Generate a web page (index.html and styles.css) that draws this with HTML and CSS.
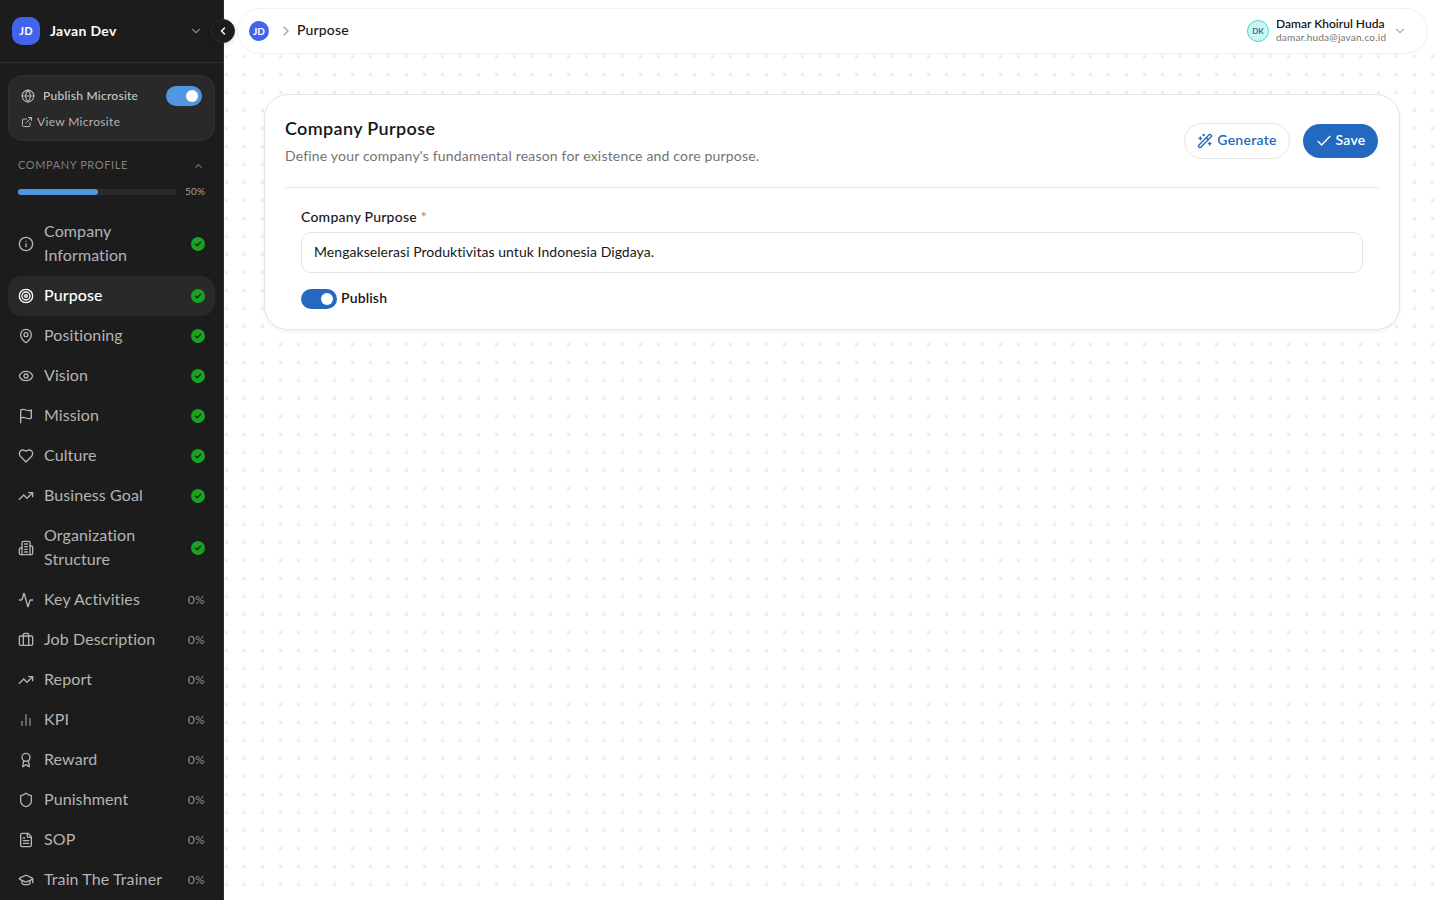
FILE: index.html
```html
<!DOCTYPE html>
<html lang="en">
<head>
  <meta charset="UTF-8">
  <meta name="viewport" content="width=device-width, initial-scale=1">
  <title>Purpose - Javan Dev</title>
  <link rel="stylesheet" href="styles.css">
</head>
<body>

<aside class="sidebar">
  <div class="workspace">
    <span class="logo">JD</span>
    <span class="workspace-name">Javan Dev</span>
    <svg class="icon i14 dim" viewBox="0 0 24 24"><path d="m6 9 6 6 6-6"/></svg>
  </div>
  <button class="collapse"><svg class="icon i12" viewBox="0 0 24 24"><path d="m15 18-6-6 6-6"/></svg></button>

  <div class="microsite">
    <div class="microsite-row">
      <svg class="icon i14" viewBox="0 0 24 24"><circle cx="12" cy="12" r="10"/><path d="M12 2a14.5 14.5 0 0 0 0 20 14.5 14.5 0 0 0 0-20"/><path d="M2 12h20"/></svg>
      <span class="microsite-label">Publish Microsite</span>
      <span class="toggle light"></span>
    </div>
    <a class="microsite-link" href="#">
      <svg class="icon i12" viewBox="0 0 24 24"><path d="M15 3h6v6"/><path d="M10 14 21 3"/><path d="M18 13v6a2 2 0 0 1-2 2H5a2 2 0 0 1-2-2V8a2 2 0 0 1 2-2h6"/></svg>
      <span>View Microsite</span>
    </a>
  </div>

  <div class="group">
    <span class="group-title">COMPANY PROFILE</span>
    <svg class="icon i12" viewBox="0 0 24 24"><path d="m6 15 6-6 6 6"/></svg>
  </div>
  <div class="progress">
    <div class="track"><div class="bar" style="width: 50%"></div></div>
    <span class="progress-value">50%</span>
  </div>

  <nav class="menu">
    <a class="item" href="#">
      <svg class="icon i16" viewBox="0 0 24 24"><circle cx="12" cy="12" r="10"/><path d="M12 16v-4"/><path d="M12 8h.01"/></svg>
      <span class="name">Company Information</span>
      <svg class="done" viewBox="0 0 14 14"><circle cx="7" cy="7" r="7"/><path d="m4.3 7.1 1.9 1.7 3.4-3.5"/></svg>
    </a>
    <a class="item active" href="#">
      <svg class="icon i16" viewBox="0 0 24 24"><circle cx="12" cy="12" r="10"/><circle cx="12" cy="12" r="6"/><circle cx="12" cy="12" r="2"/></svg>
      <span class="name">Purpose</span>
      <svg class="done" viewBox="0 0 14 14"><circle cx="7" cy="7" r="7"/><path d="m4.3 7.1 1.9 1.7 3.4-3.5"/></svg>
    </a>
    <a class="item" href="#">
      <svg class="icon i16" viewBox="0 0 24 24"><path d="M20 10c0 5-5.500 10.200-7.400 11.800a1 1 0 0 1-1.200 0C9.500 20.200 4 15 4 10a8 8 0 0 1 16 0"/><circle cx="12" cy="10" r="3"/></svg>
      <span class="name">Positioning</span>
      <svg class="done" viewBox="0 0 14 14"><circle cx="7" cy="7" r="7"/><path d="m4.3 7.1 1.9 1.7 3.4-3.5"/></svg>
    </a>
    <a class="item" href="#">
      <svg class="icon i16" viewBox="0 0 24 24"><path d="M2.060 12.350a1 1 0 0 1 0-.7 10.750 10.750 0 0 1 19.880 0 1 1 0 0 1 0 .7 10.750 10.750 0 0 1-19.880 0"/><circle cx="12" cy="12" r="3"/></svg>
      <span class="name">Vision</span>
      <svg class="done" viewBox="0 0 14 14"><circle cx="7" cy="7" r="7"/><path d="m4.3 7.1 1.9 1.7 3.4-3.5"/></svg>
    </a>
    <a class="item" href="#">
      <svg class="icon i16" viewBox="0 0 24 24"><path d="M4 15s1-1 4-1 5 2 8 2 4-1 4-1V3s-1 1-4 1-5-2-8-2-4 1-4 1z"/><path d="M4 22v-7"/></svg>
      <span class="name">Mission</span>
      <svg class="done" viewBox="0 0 14 14"><circle cx="7" cy="7" r="7"/><path d="m4.3 7.1 1.9 1.7 3.4-3.5"/></svg>
    </a>
    <a class="item" href="#">
      <svg class="icon i16" viewBox="0 0 24 24"><path d="M19 14c1.490-1.460 3-3.210 3-5.500A5.500 5.500 0 0 0 16.500 3c-1.760 0-3 .5-4.500 2-1.500-1.500-2.740-2-4.500-2A5.500 5.500 0 0 0 2 8.500c0 2.300 1.500 4.050 3 5.500l7 7Z"/></svg>
      <span class="name">Culture</span>
      <svg class="done" viewBox="0 0 14 14"><circle cx="7" cy="7" r="7"/><path d="m4.3 7.1 1.9 1.7 3.4-3.5"/></svg>
    </a>
    <a class="item" href="#">
      <svg class="icon i16" viewBox="0 0 24 24"><path d="m22 7-8.500 8.500-5-5L2 17"/><path d="M16 7h6v6"/></svg>
      <span class="name">Business Goal</span>
      <svg class="done" viewBox="0 0 14 14"><circle cx="7" cy="7" r="7"/><path d="m4.3 7.1 1.9 1.7 3.4-3.5"/></svg>
    </a>
    <a class="item" href="#">
      <svg class="icon i16" viewBox="0 0 24 24"><path d="M6 22V4a2 2 0 0 1 2-2h8a2 2 0 0 1 2 2v18Z"/><path d="M6 12H4a2 2 0 0 0-2 2v6a2 2 0 0 0 2 2h2"/><path d="M18 9h2a2 2 0 0 1 2 2v9a2 2 0 0 1-2 2h-2"/><path d="M10 6h4M10 10h4M10 14h4M10 18h4"/></svg>
      <span class="name">Organization Structure</span>
      <svg class="done" viewBox="0 0 14 14"><circle cx="7" cy="7" r="7"/><path d="m4.3 7.1 1.9 1.7 3.4-3.5"/></svg>
    </a>
    <a class="item" href="#">
      <svg class="icon i16" viewBox="0 0 24 24"><path d="M22 12h-2.480a2 2 0 0 0-1.930 1.460l-2.350 8.360a.25.25 0 0 1-.48 0L9.240 2.180a.25.25 0 0 0-.48 0l-2.350 8.360A2 2 0 0 1 4.490 12H2"/></svg>
      <span class="name">Key Activities</span>
      <span class="percent">0%</span>
    </a>
    <a class="item" href="#">
      <svg class="icon i16" viewBox="0 0 24 24"><path d="M16 20V4a2 2 0 0 0-2-2h-4a2 2 0 0 0-2 2v16"/><rect x="2" y="6" width="20" height="14" rx="2"/></svg>
      <span class="name">Job Description</span>
      <span class="percent">0%</span>
    </a>
    <a class="item" href="#">
      <svg class="icon i16" viewBox="0 0 24 24"><path d="m22 7-8.500 8.500-5-5L2 17"/><path d="M16 7h6v6"/></svg>
      <span class="name">Report</span>
      <span class="percent">0%</span>
    </a>
    <a class="item" href="#">
      <svg class="icon i16 bars" viewBox="0 0 24 24"><path d="M18 20V10"/><path d="M12 20V4"/><path d="M6 20v-6"/></svg>
      <span class="name">KPI</span>
      <span class="percent">0%</span>
    </a>
    <a class="item" href="#">
      <svg class="icon i16" viewBox="0 0 24 24"><circle cx="12" cy="8" r="6"/><path d="m15.480 12.890 1.510 8.530a.5.5 0 0 1-.81.47l-3.580-2.690a1 1 0 0 0-1.200 0l-3.590 2.690a.5.5 0 0 1-.81-.47l1.510-8.530"/></svg>
      <span class="name">Reward</span>
      <span class="percent">0%</span>
    </a>
    <a class="item" href="#">
      <svg class="icon i16" viewBox="0 0 24 24"><path d="M20 13c0 5-3.500 7.500-7.660 8.950a1 1 0 0 1-.67-.01C7.500 20.500 4 18 4 13V6a1 1 0 0 1 1-1c2 0 4.500-1.200 6.240-2.720a1.170 1.170 0 0 1 1.520 0C14.510 3.810 17 5 19 5a1 1 0 0 1 1 1z"/></svg>
      <span class="name">Punishment</span>
      <span class="percent">0%</span>
    </a>
    <a class="item" href="#">
      <svg class="icon i16" viewBox="0 0 24 24"><path d="M15 2H6a2 2 0 0 0-2 2v16a2 2 0 0 0 2 2h12a2 2 0 0 0 2-2V7Z"/><path d="M14 2v4a2 2 0 0 0 2 2h4"/><path d="M10 9H8M16 13H8M16 17H8"/></svg>
      <span class="name">SOP</span>
      <span class="percent">0%</span>
    </a>
    <a class="item" href="#">
      <svg class="icon i16" viewBox="0 0 24 24"><path d="M21.420 10.920a1 1 0 0 0-.02-1.840L12.830 5.180a2 2 0 0 0-1.660 0L2.600 9.080a1 1 0 0 0 0 1.830l8.570 3.910a2 2 0 0 0 1.660 0z"/><path d="M22 10v6"/><path d="M6 12.500V16a6 3 0 0 0 12 0v-3.500"/></svg>
      <span class="name">Train The Trainer</span>
      <span class="percent">0%</span>
    </a>
  </nav>
</aside>

<main class="main">
  <div class="top">
    <header class="topbar">
      <span class="logo small">JD</span>
      <svg class="icon i16 crumb-arrow" viewBox="0 0 24 24"><path d="m9 18 6-6-6-6"/></svg>
      <span class="crumb">Purpose</span>
      <div class="user">
        <span class="avatar">DK</span>
        <div class="user-text">
          <div class="user-name">Damar Khoirul Huda</div>
          <div class="user-mail">damar.huda@javan.co.id</div>
        </div>
        <svg class="icon i14 user-arrow" viewBox="0 0 24 24"><path d="m6 9 6 6 6-6"/></svg>
      </div>
    </header>
  </div>

  <section class="card">
    <div class="card-head">
      <div>
        <h2>Company Purpose</h2>
        <p class="desc">Define your company's fundamental reason for existence and core purpose.</p>
      </div>
      <div class="actions">
        <button class="btn outline">
          <svg class="icon i16" viewBox="0 0 24 24"><path d="m21.640 3.640-1.280-1.280a1.210 1.210 0 0 0-1.720 0L2.360 18.640a1.210 1.210 0 0 0 0 1.720l1.280 1.280a1.200 1.200 0 0 0 1.720 0L21.640 5.360a1.200 1.200 0 0 0 0-1.720"/><path d="m14 7 3 3"/><path d="M5 6v4M19 14v4M10 2v2M7 8H3M21 16h-4M11 3H9"/></svg>
          <span>Generate</span>
        </button>
        <button class="btn primary">
          <svg class="icon i16" viewBox="0 0 24 24"><path d="M21 5 8.500 18 3 12.500"/></svg>
          <span>Save</span>
        </button>
      </div>
    </div>
    <div class="form">
      <label class="label" for="purpose">Company Purpose <span class="required">*</span></label>
      <input class="input" id="purpose" type="text" value="Mengakselerasi Produktivitas untuk Indonesia Digdaya.">
      <div class="publish">
        <span class="toggle"></span>
        <span class="publish-label">Publish</span>
      </div>
    </div>
  </section>
</main>

</body>
</html>
```
FILE: styles.css
```css
* {
  box-sizing: border-box;
}
body {
  margin: 0;
  height: 100vh;
  display: flex;
  overflow: hidden;
  font-family: Lato, "Open Sans", sans-serif;
  font-variant-ligatures: none;
  color: #171717;
  background: #fff;
}
button {
  font-family: inherit;
}

.icon {
  flex: none;
  fill: none;
  stroke: currentColor;
  stroke-width: 2;
  stroke-linecap: round;
  stroke-linejoin: round;
}
.i12 { width: 12px; height: 12px; }
.i14 { width: 14px; height: 14px; }
.i16 { width: 16px; height: 16px; }

/* sidebar */
.sidebar {
  position: relative;
  z-index: 2;
  width: 224px;
  flex: none;
  background: #1c1c1c;
  border-right: 1px solid #2e2e2e;
  color: #b4b4b4;
}
.workspace {
  display: flex;
  align-items: center;
  height: 63px;
  padding: 0 20px 0 12px;
  border-bottom: 1px solid #2e2e2e;
}
.logo {
  display: flex;
  align-items: center;
  justify-content: center;
  width: 28px;
  height: 28px;
  padding-bottom: 1px;
  border-radius: 10px;
  background: #4263eb;
  color: #fff;
  font-size: 11px;
  font-weight: 700;
  letter-spacing: 0.2px;
}
.logo.small {
  width: 20px;
  height: 20px;
  border-radius: 50%;
  font-size: 10px;
  letter-spacing: 0;
}
.workspace-name {
  flex: 1;
  margin-left: 10px;
  padding-bottom: 2px;
  font-size: 14px;
  font-weight: 700;
  letter-spacing: 0.35px;
  color: #fafafa;
}
.dim {
  color: #858585;
}
.collapse {
  position: absolute;
  top: 19px;
  right: -12px;
  width: 24px;
  height: 24px;
  padding: 0;
  display: flex;
  align-items: center;
  justify-content: center;
  border: 1px solid #2e2e2e;
  border-radius: 50%;
  background: #1c1c1c;
  color: #fff;
  box-shadow: 0 2px 5px rgba(0, 0, 0, 0.12);
}
.collapse .icon {
  stroke-width: 3;
}

.microsite {
  margin: 12px 8px 0;
  height: 66px;
  padding: 10px 12px;
  border: 1px solid #303030;
  border-radius: 14px;
  background: #292929;
  font-size: 12px;
}
.microsite-row {
  display: flex;
  align-items: center;
  height: 20px;
}
.microsite-label {
  flex: 1;
  margin-left: 8px;
  padding-bottom: 2px;
  font-weight: 500;
  color: #c8c8c8;
  letter-spacing: 0.25px;
}
.microsite-link {
  display: flex;
  align-items: center;
  gap: 4px;
  height: 16px;
  margin-top: 8px;
  color: inherit;
  text-decoration: none;
  letter-spacing: 0.32px;
}
.microsite-link span {
  padding-bottom: 2px;
}
.toggle {
  display: flex;
  align-items: center;
  justify-content: flex-end;
  width: 36px;
  height: 20px;
  padding: 4px;
  border-radius: 10px;
  background: #2269bf;
}
.toggle::after {
  content: "";
  width: 12px;
  height: 12px;
  border-radius: 50%;
  background: #fff;
}
.toggle.light {
  background: #5295e0;
}

.group {
  display: flex;
  align-items: center;
  justify-content: space-between;
  height: 16px;
  margin: 17px 18px 0;
}
.group .icon {
  width: 11px;
  margin-right: 1px;
}
.group-title {
  padding-bottom: 3px;
  font-size: 11px;
  letter-spacing: 0.6px;
  color: #808080;
}
.progress {
  display: flex;
  align-items: center;
  gap: 8px;
  height: 16px;
  margin: 10px 18px 0;
}
.track {
  flex: 1;
  height: 6px;
  border-radius: 3px;
  background: #292929;
}
.bar {
  height: 6px;
  border-radius: 3px;
  background: #5295e0;
}
.progress-value {
  width: 20px;
  padding-bottom: 2px;
  font-size: 10px;
  letter-spacing: 0.2px;
  color: #a0a0a0;
}

.menu {
  padding: 12px 8px 0;
}
.item {
  display: flex;
  align-items: center;
  gap: 10px;
  padding: 8px 10px;
  border-radius: 14px;
  color: #b4b4b4;
  font-size: 16px;
  line-height: 24px;
  text-decoration: none;
}
.item.active {
  background: #292929;
  color: #fff;
  font-weight: 500;
}
.name {
  flex: 1;
  margin: -1px 0 1px;
  letter-spacing: 0.1px;
}
.bars {
  opacity: 0.75;
}
.done {
  flex: none;
  width: 14px;
  height: 14px;
  fill: #16a31f;
}
.done path {
  fill: none;
  stroke: #1c1c1c;
  stroke-width: 1.3;
  stroke-linecap: round;
  stroke-linejoin: round;
}
.percent {
  font-size: 12px;
  letter-spacing: 0.3px;
  color: #8f8f8f;
}

/* content */
.main {
  flex: 1;
  background-image: radial-gradient(circle, #e8e8e8 1.3px, transparent 1.9px);
  background-size: 18px 18px;
  background-position: -6.500px -6.500px;
}
.top {
  height: 54px;
  padding: 8px 12px 0 13px;
  background: #fff;
}
.topbar {
  display: flex;
  align-items: center;
  height: 46px;
  padding: 0 20px 0 11px;
  border: 1px solid #f0f0f0;
  border-radius: 23px;
}
.crumb-arrow {
  margin-left: 9px;
  color: #a3a3a3;
}
.crumb {
  margin-left: 3px;
  padding-bottom: 3px;
  font-size: 14px;
  font-weight: 500;
  letter-spacing: 0.15px;
}
.user {
  display: flex;
  align-items: center;
  margin-left: auto;
}
.avatar {
  display: flex;
  align-items: center;
  justify-content: center;
  width: 22px;
  height: 22px;
  border: 1px solid #45dccb;
  border-radius: 50%;
  background: #cdf5f5;
  color: #3d6f9f;
  font-size: 8px;
  font-weight: 700;
}
.user-text {
  width: 110px;
  margin: 0 7px 0 7px;
  padding-bottom: 2px;
  white-space: nowrap;
}
.user-name {
  font-size: 12px;
  line-height: 14px;
  font-weight: 600;
}
.user-mail {
  font-size: 10px;
  line-height: 12px;
  letter-spacing: 0.22px;
  color: #737373;
}
.user-arrow {
  color: #b0b0b0;
}

.card {
  margin: 40px 40px 0;
  height: 236px;
  padding: 0 20px;
  border: 1px solid #e5e5e5;
  border-radius: 24px;
  background: #fff;
  box-shadow: 0 2px 4px rgba(0, 0, 0, 0.06);
}
.card-head {
  display: flex;
  align-items: center;
  justify-content: space-between;
  height: 93px;
  border-bottom: 1px solid #e5e5e5;
}
h2 {
  margin: 0 0 4px;
  font-size: 18px;
  line-height: 28px;
  font-weight: 600;
  letter-spacing: 0.35px;
}
.desc {
  margin: 0;
  padding-bottom: 2px;
  font-size: 14px;
  line-height: 20px;
  letter-spacing: 0.18px;
  color: #737373;
}
.actions {
  display: flex;
  align-items: center;
  gap: 13px;
  margin-right: 1px;
}
.btn {
  display: flex;
  align-items: center;
  justify-content: center;
  gap: 4px;
  border: 0;
  border-radius: 18px;
  font-size: 14px;
  font-weight: 600;
  letter-spacing: 0.25px;
}
.btn span {
  padding-bottom: 3px;
}
.btn.outline {
  width: 106px;
  height: 36px;
  border: 1px solid #e5e5e5;
  background: #fff;
  color: #2269bf;
}
.btn.primary {
  width: 75px;
  height: 34px;
  background: #2269bf;
  color: #fff;
}
.form {
  padding: 19px 16px 0;
}
.label {
  display: block;
  font-size: 14px;
  line-height: 20px;
  font-weight: 500;
  letter-spacing: 0.23px;
}
.required {
  color: #cf7a1c;
}
.input {
  display: block;
  width: 100%;
  height: 41px;
  margin-top: 5px;
  padding: 0 12px 3px;
  border: 1px solid #e5e5e5;
  border-radius: 10px;
  background: #fff;
  color: #171717;
  font-family: inherit;
  font-size: 14px;
  letter-spacing: 0.05px;
}
.publish {
  display: flex;
  align-items: center;
  gap: 4px;
  margin-top: 16px;
}
.publish-label {
  padding-bottom: 3px;
  font-size: 14px;
  font-weight: 600;
  letter-spacing: 0.15px;
}
```
